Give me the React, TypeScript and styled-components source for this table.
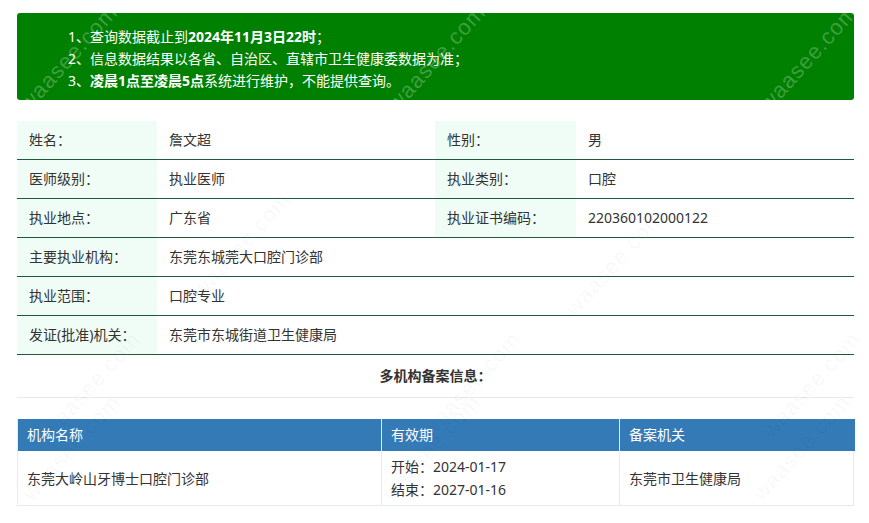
import React from "react";
import styled, { createGlobalStyle } from "styled-components";

const Global = createGlobalStyle`
  html, body { margin: 0; padding: 0; background: #fff; }
  body {
    font-family: "Noto Sans", "Noto Sans CJK SC", sans-serif;
    font-size: 14px;
    color: #333;
  }
`;

const Page = styled.div`
  position: relative;
  width: 869px;
  height: 523px;
  overflow: hidden;
  padding: 13px 15px 0 17px;
  box-sizing: border-box;
  display: flex;
  flex-direction: column;
`;

const Notice = styled.div`
  background: #008000;
  border-radius: 3px;
  color: #fff;
  height: 87px;
  box-sizing: border-box;
  padding: 13px 0 0 51px;
  display: flex;
  flex-direction: column;
`;

const NoticeLine = styled.div`
  height: 22px;
  line-height: 22px;
  white-space: nowrap;
  b { font-weight: 700; }
`;

const InfoGrid = styled.div`
  margin-top: 21px;
  display: grid;
  grid-template-columns: 140px 278px 141px 278px;
`;

const Label = styled.div`
  background: #effdf6;
  height: 38px;
  line-height: 38px;
  padding-left: 12px;
  border-bottom: 1px solid #1f5a3c;
  white-space: nowrap;
`;

const Value = styled.div<{ $wide?: boolean }>`
  height: 38px;
  line-height: 38px;
  padding-left: 12px;
  border-bottom: 1px solid #1f5a3c;
  grid-column: ${(p) => (p.$wide ? "span 3" : "auto")};
  white-space: nowrap;
`;

const SectionTitle = styled.div`
  height: 42px;
  line-height: 42px;
  text-align: center;
  font-weight: 700;
  border-bottom: 1px solid #e8e8e8;
`;

const RecordTable = styled.div`
  margin-top: 21px;
  display: grid;
  grid-template-columns: 363px 238px 236px;
  border: 1px solid #e3ecf3;
  border-top: none;
  box-sizing: border-box;
`;

const HeadCell = styled.div<{ $first?: boolean }>`
  background: #337ab7;
  color: #fff;
  height: 32px;
  line-height: 32px;
  padding-left: 9px;
  border-left: ${(p) => (p.$first ? "none" : "1px solid #dfeaf4")};
`;

const BodyCell = styled.div<{ $first?: boolean }>`
  height: 54px;
  padding-left: 9px;
  display: flex;
  flex-direction: column;
  justify-content: center;
  border-left: ${(p) => (p.$first ? "none" : "1px solid #e3ecf3")};
  line-height: 23px;
`;

const Mark = styled.div<{ $light?: boolean }>`
  position: absolute;
  font-family: "Liberation Sans", Arial, sans-serif;
  font-size: 22px;
  letter-spacing: 1px;
  color: ${(p) => (p.$light ? "rgba(255,255,255,0.25)" : "rgba(0,0,0,0.035)")};
  transform: rotate(-48deg);
  transform-origin: center;
  pointer-events: none;
  white-space: nowrap;
`;

const marks = [
  { x: 2, y: 45, light: true },
  { x: 370, y: 45, light: true },
  { x: 742, y: 45, light: true },
  { x: 175, y: 232, light: false },
  { x: 548, y: 250, light: false },
  { x: 25, y: 372, light: false },
  { x: 405, y: 372, light: false },
  { x: 745, y: 372, light: false },
  { x: 5, y: 435, light: false },
  { x: 365, y: 435, light: false },
  { x: 735, y: 435, light: false },
];

const rows: Array<[string, string, string?, string?]> = [
  ["姓名：", "詹文超", "性别：", "男"],
  ["医师级别：", "执业医师", "执业类别：", "口腔"],
  ["执业地点：", "广东省", "执业证书编码：", "220360102000122"],
  ["主要执业机构：", "东莞东城莞大口腔门诊部"],
  ["执业范围：", "口腔专业"],
  ["发证(批准)机关：", "东莞市东城街道卫生健康局"],
];

export default function App() {
  return (
    <>
      <Global />
      <Page>
        <Notice>
          <NoticeLine>
            1、查询数据截止到<b>2024年11月3日22时</b>；
          </NoticeLine>
          <NoticeLine>2、信息数据结果以各省、自治区、直辖市卫生健康委数据为准；</NoticeLine>
          <NoticeLine>
            3、<b>凌晨1点至凌晨5点</b>系统进行维护，不能提供查询。
          </NoticeLine>
        </Notice>
        <InfoGrid>
          {rows.map((r, i) => (
            <React.Fragment key={i}>
              <Label>{r[0]}</Label>
              <Value $wide={!r[2]}>{r[1]}</Value>
              {r[2] && <Label>{r[2]}</Label>}
              {r[2] && <Value>{r[3]}</Value>}
            </React.Fragment>
          ))}
        </InfoGrid>
        <SectionTitle>多机构备案信息：</SectionTitle>
        <RecordTable>
          <HeadCell $first>机构名称</HeadCell>
          <HeadCell>有效期</HeadCell>
          <HeadCell>备案机关</HeadCell>
          <BodyCell $first>东莞大岭山牙博士口腔门诊部</BodyCell>
          <BodyCell>
            <div>开始：2024-01-17</div>
            <div>结束：2027-01-16</div>
          </BodyCell>
          <BodyCell>东莞市卫生健康局</BodyCell>
        </RecordTable>
        {marks.map((m, i) => (
          <Mark key={i} $light={m.light} style={{ left: m.x, top: m.y }}>
            waasee.com
          </Mark>
        ))}
      </Page>
    </>
  );
}
